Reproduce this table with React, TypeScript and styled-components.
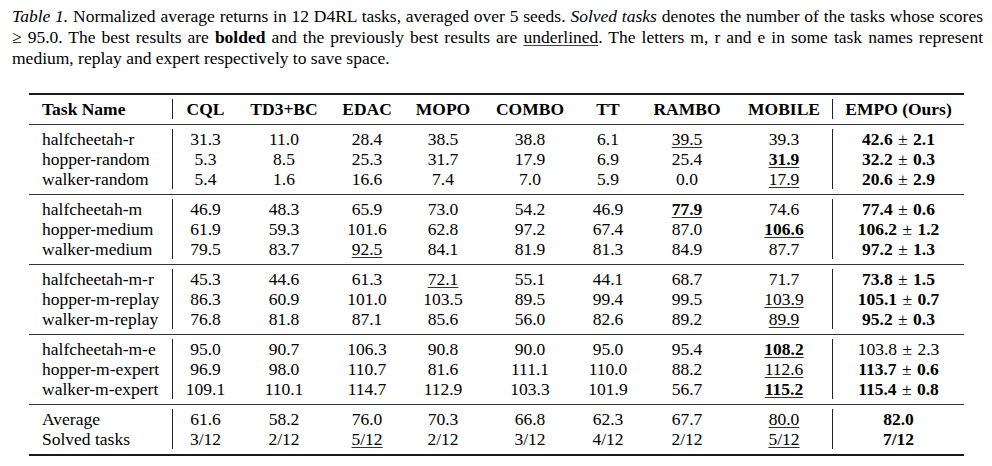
import styled, { createGlobalStyle } from "styled-components";

const GlobalStyle = createGlobalStyle`
  html, body {
    margin: 0;
    padding: 0;
    background: #ffffff;
  }
  body {
    font-family: "Liberation Serif", "Times New Roman", serif;
    color: #000000;
  }
`;

const COLS = "144px 65px 92px 74px 78px 96px 60px 98px 96px 132px";

const Page = styled.div`
  width: 992px;
  height: 466px;
  box-sizing: border-box;
  padding: 6px 0 0 12px;
`;

const Caption = styled.div`
  width: 971px;
  font-size: 17.5px;
  line-height: 21px;
`;

const CaptionLine = styled.p<{ $last?: boolean }>`
  margin: 0;
  text-align: ${(p) => (p.$last ? "left" : "justify")};
  text-align-last: ${(p) => (p.$last ? "left" : "justify")};
`;

const Under = styled.span`
  text-decoration: underline;
  text-decoration-thickness: 1px;
  text-underline-offset: 2px;
  text-decoration-color: #444;
`;

const Table = styled.div`
  margin: 24px 0 0 17px;
  width: 935px;
  font-size: 17.5px;
  line-height: 20px;
  border-bottom: 2px solid #1a1a1a;
`;

const Group = styled.div<{ $head?: boolean }>`
  display: grid;
  grid-template-columns: ${COLS};
  padding: 4px 0 5px;
  border-top: ${(p) => (p.$head ? "2px solid #1a1a1a" : "1px solid #333")};
`;

const Cell = styled.div<{ $first?: boolean; $sep?: boolean; $head?: boolean }>`
  height: 20px;
  white-space: nowrap;
  text-align: ${(p) => (p.$first ? "left" : "center")};
  padding-left: ${(p) => (p.$first ? "13px" : "0")};
  border-right: ${(p) => (p.$first ? "1px solid #222" : "none")};
  border-left: ${(p) => (p.$sep ? "1px solid #222" : "none")};
  font-weight: ${(p) => (p.$head ? 700 : 400)};
`;

const Val = styled.span<{ $bold?: boolean; $under?: boolean }>`
  font-weight: ${(p) => (p.$bold ? 700 : 400)};
  text-decoration: ${(p) => (p.$under ? "underline" : "none")};
  text-decoration-thickness: 1px;
  text-underline-offset: 2px;
  text-decoration-color: #333;
`;

const Pm = styled.span`
  font-weight: 400;
  margin: 0 1px;
`;

const headers = [
  "Task Name",
  "CQL",
  "TD3+BC",
  "EDAC",
  "MOPO",
  "COMBO",
  "TT",
  "RAMBO",
  "MOBILE",
  "EMPO (Ours)",
];

// "b:" bold, "u:" underlined, "bu:" both
type Row = { name: string; vals: string[]; ours: string };

const groups: Row[][] = [
  [
    { name: "halfcheetah-r", vals: ["31.3", "11.0", "28.4", "38.5", "38.8", "6.1", "u:39.5", "39.3"], ours: "b:42.6|2.1" },
    { name: "hopper-random", vals: ["5.3", "8.5", "25.3", "31.7", "17.9", "6.9", "25.4", "bu:31.9"], ours: "b:32.2|0.3" },
    { name: "walker-random", vals: ["5.4", "1.6", "16.6", "7.4", "7.0", "5.9", "0.0", "u:17.9"], ours: "b:20.6|2.9" },
  ],
  [
    { name: "halfcheetah-m", vals: ["46.9", "48.3", "65.9", "73.0", "54.2", "46.9", "bu:77.9", "74.6"], ours: "b:77.4|0.6" },
    { name: "hopper-medium", vals: ["61.9", "59.3", "101.6", "62.8", "97.2", "67.4", "87.0", "bu:106.6"], ours: "b:106.2|1.2" },
    { name: "walker-medium", vals: ["79.5", "83.7", "u:92.5", "84.1", "81.9", "81.3", "84.9", "87.7"], ours: "b:97.2|1.3" },
  ],
  [
    { name: "halfcheetah-m-r", vals: ["45.3", "44.6", "61.3", "u:72.1", "55.1", "44.1", "68.7", "71.7"], ours: "b:73.8|1.5" },
    { name: "hopper-m-replay", vals: ["86.3", "60.9", "101.0", "103.5", "89.5", "99.4", "99.5", "u:103.9"], ours: "b:105.1|0.7" },
    { name: "walker-m-replay", vals: ["76.8", "81.8", "87.1", "85.6", "56.0", "82.6", "89.2", "u:89.9"], ours: "b:95.2|0.3" },
  ],
  [
    { name: "halfcheetah-m-e", vals: ["95.0", "90.7", "106.3", "90.8", "90.0", "95.0", "95.4", "bu:108.2"], ours: "103.8|2.3" },
    { name: "hopper-m-expert", vals: ["96.9", "98.0", "110.7", "81.6", "111.1", "110.0", "88.2", "u:112.6"], ours: "b:113.7|0.6" },
    { name: "walker-m-expert", vals: ["109.1", "110.1", "114.7", "112.9", "103.3", "101.9", "56.7", "bu:115.2"], ours: "b:115.4|0.8" },
  ],
  [
    { name: "Average", vals: ["61.6", "58.2", "76.0", "70.3", "66.8", "62.3", "67.7", "u:80.0"], ours: "b:82.0" },
    { name: "Solved tasks", vals: ["3/12", "2/12", "u:5/12", "2/12", "3/12", "4/12", "2/12", "u:5/12"], ours: "b:7/12" },
  ],
];

const parse = (v: string) => {
  const m = v.match(/^(bu|b|u):(.*)$/);
  if (!m) return { text: v, bold: false, under: false };
  return { text: m[2], bold: m[1].includes("b"), under: m[1].includes("u") };
};

const Value = ({ v }: { v: string }) => {
  const { text, bold, under } = parse(v);
  return (
    <Val $bold={bold} $under={under}>
      {text}
    </Val>
  );
};

const Ours = ({ v }: { v: string }) => {
  const { text, bold } = parse(v);
  const [mean, std] = text.split("|");
  return (
    <>
      <Val $bold={bold}>{mean}</Val>
      {std && (
        <>
          {" "}
          <Pm>±</Pm> <Val $bold={bold}>{std}</Val>
        </>
      )}
    </>
  );
};

const App = () => {
  return (
    <Page>
      <GlobalStyle />
      <Caption>
        <CaptionLine>
          <i>Table 1.</i> Normalized average returns in 12 D4RL tasks, averaged over 5 seeds.{" "}
          <i>Solved tasks</i> denotes the number of the tasks whose scores
        </CaptionLine>
        <CaptionLine>
          ≥ 95.0. The best results are <b>bolded</b> and the previously best results are{" "}
          <Under>underlined</Under>. The letters m, r and e in some task names represent
        </CaptionLine>
        <CaptionLine $last>medium, replay and expert respectively to save space.</CaptionLine>
      </Caption>

      <Table>
        <Group $head>
          {headers.map((h, i) => (
            <Cell key={h} $head $first={i === 0} $sep={i === 9}>
              {h}
            </Cell>
          ))}
        </Group>
        {groups.map((rows, gi) => (
          <Group key={gi}>
            {rows.map((r) => [
              <Cell key={r.name + "-n"} $first>
                {r.name}
              </Cell>,
              ...r.vals.map((v, i) => (
                <Cell key={r.name + i}>
                  <Value v={v} />
                </Cell>
              )),
              <Cell key={r.name + "-o"} $sep>
                <Ours v={r.ours} />
              </Cell>,
            ])}
          </Group>
        ))}
      </Table>
    </Page>
  );
};

export default App;
